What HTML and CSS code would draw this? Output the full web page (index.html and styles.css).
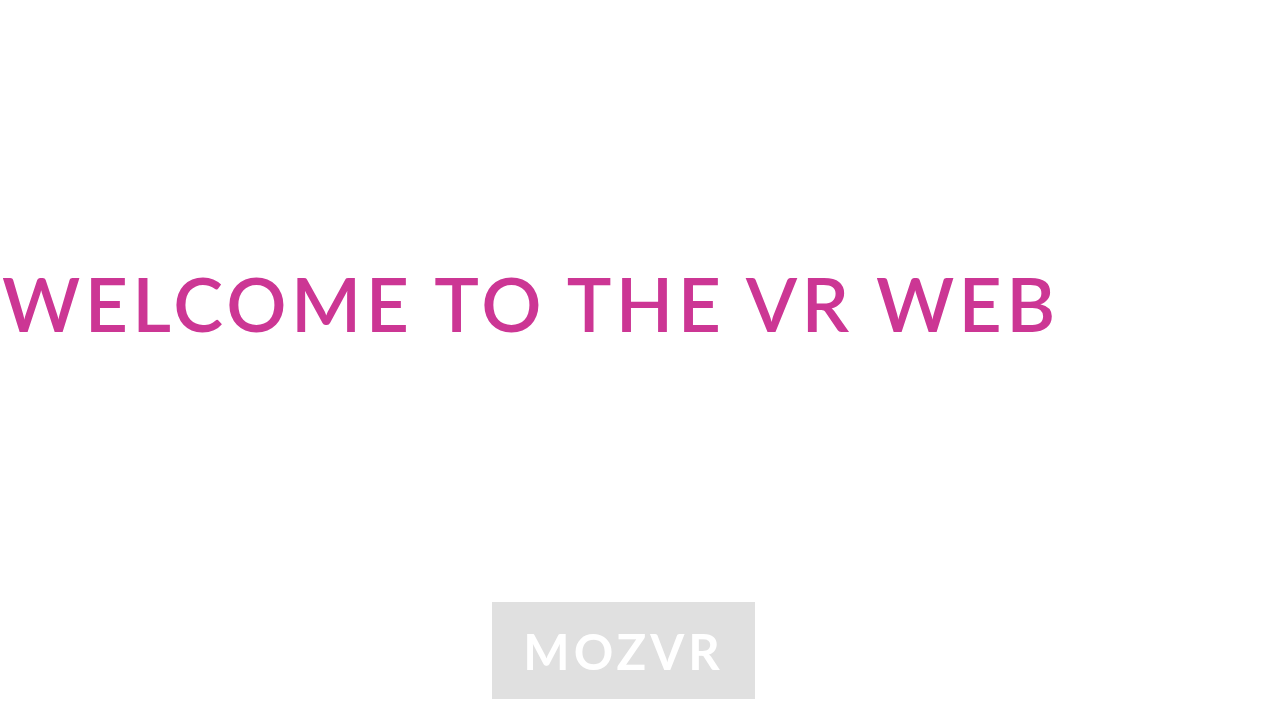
FILE: index.html
```html
<!DOCTYPE html>
<html lang="en">
<head>
<meta charset="utf-8">
<title>MozVR</title>
<link rel="stylesheet" href="styles.css">
</head>
<body>
<main class="page">
  <h1 class="quote"><span class="quote-line">Wherever you go,</span><span class="quote-line">there you are.</span></h1>
  <h2 class="welcome">Welcome to the VR web</h2>
  <div class="cta-row">
    <a class="cta" href="#">MozVR</a>
  </div>
</main>
</body>
</html>
```
FILE: styles.css
```css
html, body {
  margin: 0;
  padding: 0;
  background: #ffffff;
}
body {
  font-family: Lato, "Open Sans", "Liberation Sans", sans-serif;
  overflow: hidden;
}
.page {
  display: flex;
  flex-direction: column;
}
.quote {
  display: flex;
  flex-direction: column;
  gap: 44px;
  margin: 0;
  font-size: 117px;
  line-height: 88px;
  font-weight: 400;
  text-transform: uppercase;
  color: #ffffff;
  letter-spacing: 7.5px;
  white-space: nowrap;
}
.quote-line {
  display: block;
}
.welcome {
  margin: 38px 0 0 2px;
  font-size: 75px;
  line-height: 90px;
  font-weight: 600;
  text-transform: uppercase;
  color: #cc3694;
  letter-spacing: 4.4px;
  white-space: nowrap;
}
.cta-row {
  display: flex;
  margin-top: 254px;
  padding-left: 492px;
}
.cta {
  display: flex;
  align-items: center;
  justify-content: center;
  width: 263px;
  height: 97px;
  background: #e0e0e0;
  color: #ffffff;
  font-size: 49px;
  font-weight: 700;
  text-transform: uppercase;
  text-decoration: none;
  letter-spacing: 4px;
}
```
